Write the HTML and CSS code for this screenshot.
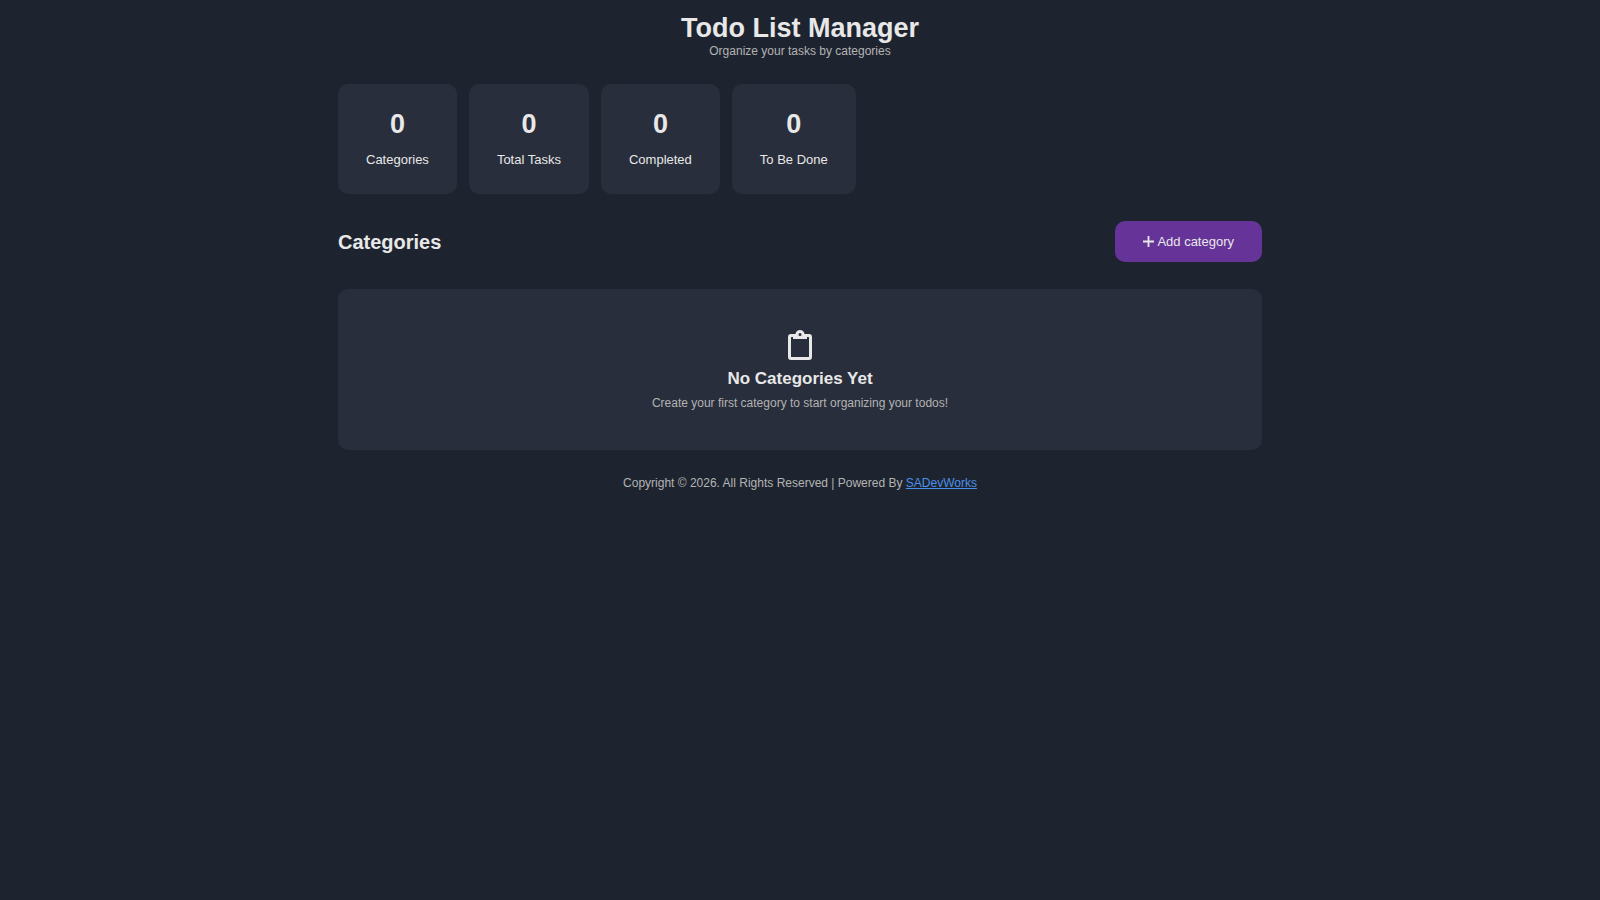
FILE: index.html
```html
<!DOCTYPE html>
<html lang="en">
<head>
<meta charset="utf-8">
<meta name="viewport" content="width=device-width, initial-scale=1">
<title>Todo List Manager</title>
<link rel="stylesheet" href="styles.css">
</head>
<body>
<div class="container">
  <header class="header">
    <h1 class="title">Todo List Manager</h1>
    <p class="muted">Organize your tasks by categories</p>
  </header>
  <main class="main">
    <section class="stats" aria-label="Statistics">
      <div class="stat"><span class="stat-value">0</span><span class="stat-label">Categories</span></div>
      <div class="stat"><span class="stat-value">0</span><span class="stat-label">Total Tasks</span></div>
      <div class="stat"><span class="stat-value">0</span><span class="stat-label">Completed</span></div>
      <div class="stat"><span class="stat-value">0</span><span class="stat-label">To Be Done</span></div>
    </section>
    <div class="toolbar">
      <h2 class="section-title">Categories</h2>
      <button class="button" type="button">
        <svg class="plus" viewBox="0 0 11 11" aria-hidden="true"><path d="M5.5 0v11M0 5.5h11" fill="none" stroke="currentColor" stroke-width="1.8"/></svg>
        <span>Add category</span>
      </button>
    </div>
    <section class="empty">
      <svg class="clipboard" viewBox="0 0 24 30" aria-hidden="true"><path fill="currentColor" fill-rule="evenodd" d="M7.4 4C8 1.6 9.7 0 12 0s4 1.6 4.600 4H21a3 3 0 0 1 3 3v20a3 3 0 0 1-3 3H3a3 3 0 0 1-3-3V7a3 3 0 0 1 3-3zM12 2.900a1.500 1.500 0 1 0 0 3 1.500 1.500 0 0 0 0-3zM3.500 7Q3 7 3 7.500V26.500Q3 27 3.500 27H20.500Q21 27 21 26.500V7.500Q21 7 20.500 7H19v2H5V7z"/></svg>
      <h3 class="empty-title">No Categories Yet</h3>
      <p class="muted">Create your first category to start organizing your todos!</p>
    </section>
  </main>
  <footer class="footer muted">Copyright © 2026. All Rights Reserved | Powered By <a class="link" href="#">SADevWorks</a></footer>
</div>
</body>
</html>
```
FILE: styles.css
```css
* {
  box-sizing: border-box;
  margin: 0;
  padding: 0;
}

body {
  background: #1e242f;
  color: #e8e8e8;
  font-family: "Liberation Sans", Arial, sans-serif;
  font-size: 13px;
  line-height: 15px;
}

.container {
  display: flex;
  flex-direction: column;
  gap: 26px;
  max-width: 950px;
  margin: 0 auto;
  padding: 13px;
}

.header {
  text-align: center;
}

.title {
  font-size: 27px;
  line-height: 31px;
}

.muted {
  color: #b3b3b3;
  font-size: 12px;
  line-height: 14px;
}

.main {
  display: flex;
  flex-direction: column;
  gap: 27px;
}

.stats {
  display: flex;
  flex-wrap: wrap;
  gap: 12px;
}

.stat {
  display: flex;
  flex-direction: column;
  align-items: center;
  gap: 14px;
  padding: 27px 28px;
  border-radius: 10px;
  background: #282e3b;
}

.stat-value {
  font-size: 27px;
  font-weight: bold;
  line-height: 27px;
}

.toolbar {
  display: flex;
  align-items: center;
  justify-content: space-between;
}

.section-title {
  font-size: 20px;
  line-height: 24px;
}

.button {
  display: flex;
  align-items: center;
  gap: 3px;
  padding: 13px 28px;
  border: 0;
  border-radius: 10px;
  background: #663399;
  color: inherit;
  font: inherit;
  cursor: pointer;
}

.plus {
  width: 11px;
  height: 11px;
}

.empty {
  display: flex;
  flex-direction: column;
  align-items: center;
  gap: 7px;
  padding: 40px;
  border-radius: 10px;
  background: #282e3b;
  text-align: center;
}

.clipboard {
  width: 24px;
  height: 32px;
}

.empty-title {
  font-size: 17px;
  line-height: 21px;
}

.footer {
  text-align: center;
}

.link {
  color: #4a90e8;
}
```
